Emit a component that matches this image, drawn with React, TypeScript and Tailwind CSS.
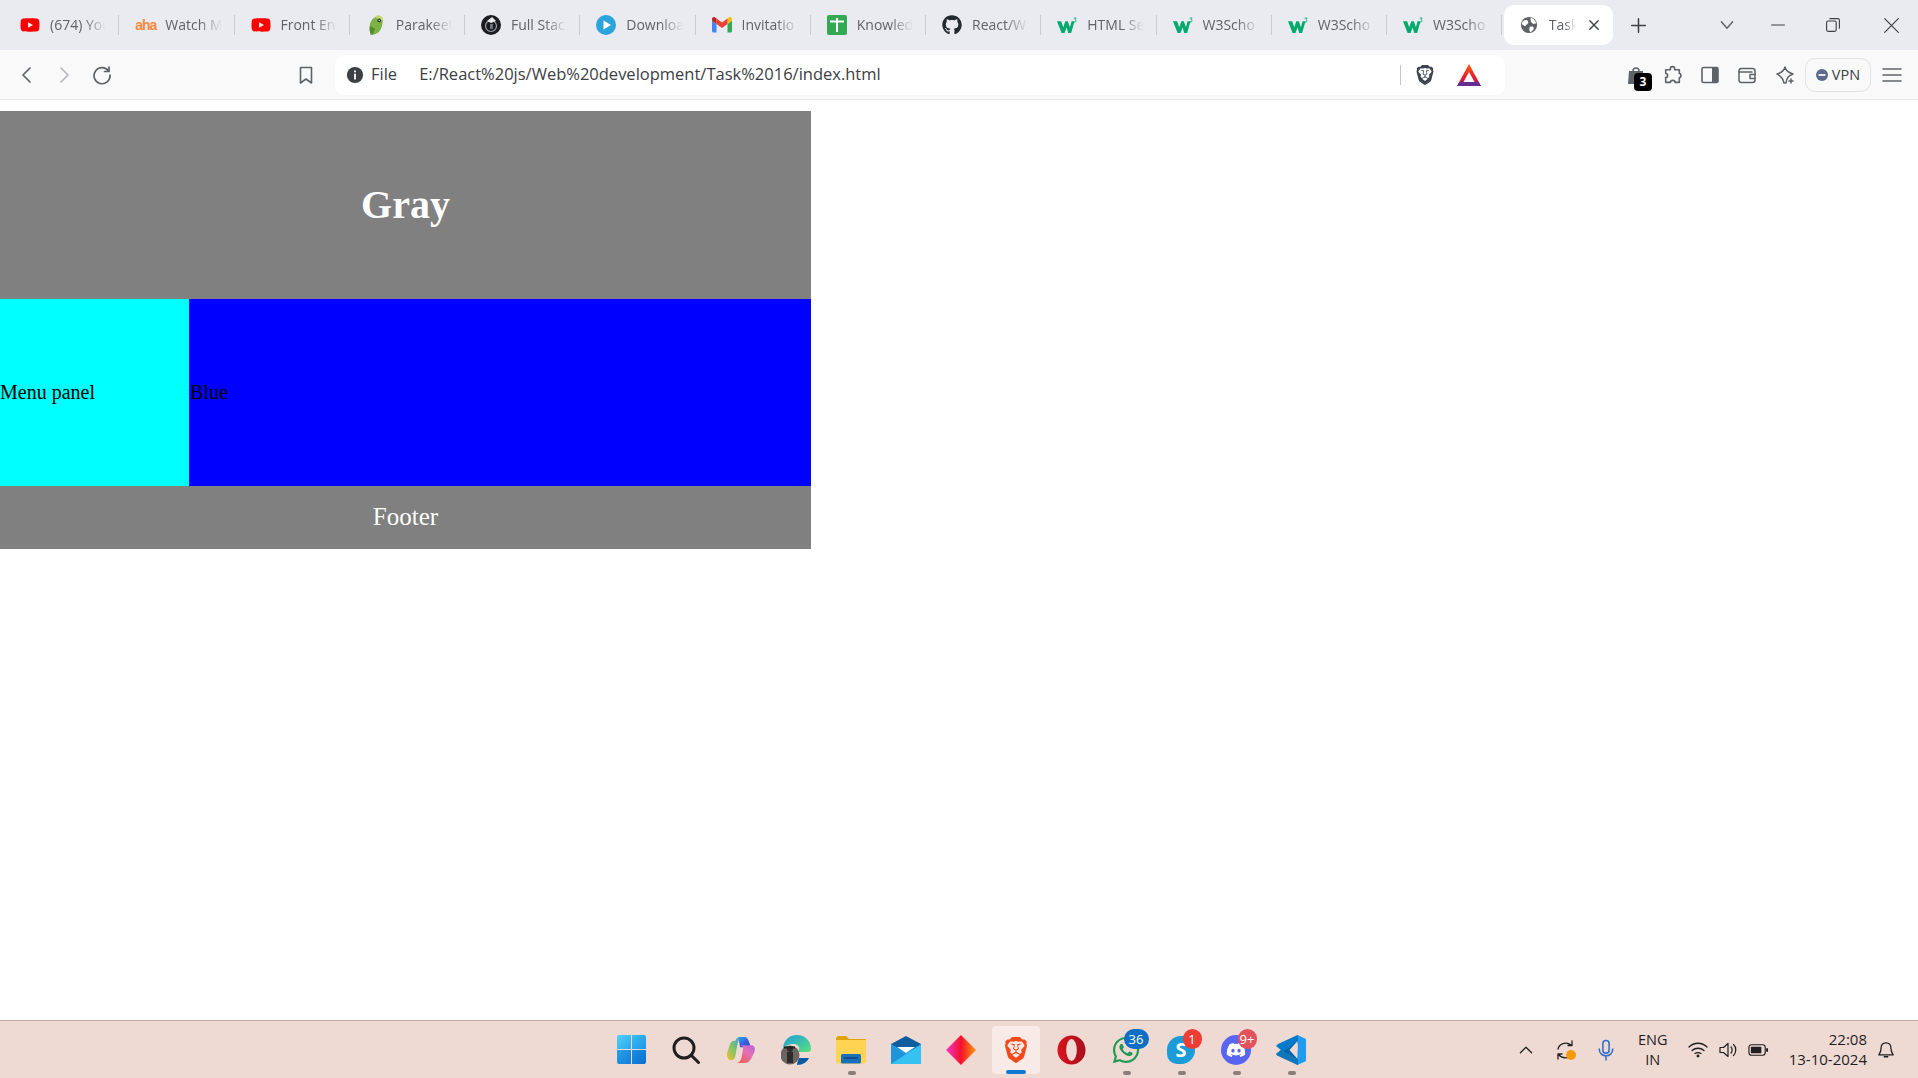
import React from "react";
import { FaGithub, FaYoutube, FaWhatsapp, FaDiscord } from "react-icons/fa";
import { SiBrave } from "react-icons/si";

const W3 = () => (
  <svg viewBox="0 0 24 20" className="w-5 h-[17px]">
    <polygon fill="#04AA6D" points="0,5 5,5 7.5,12 10,5 13,5 15.5,12 17.5,5 21,5 17,19 13.5,19 11.5,12.500 9,19 5.5,19" />
    <path d="M20 1 H23 L21.500 3 C23.500 3 23.500 6.500 20 6" fill="none" stroke="#04AA6D" strokeWidth="1" />
  </svg>
);

const YT = () => <FaYoutube className="w-5 h-5 text-[#ff0000]" />;

const Aha = () => (
  <span className="w-5 text-center text-[14px] font-bold leading-none text-[#f58a3c] tracking-[-1px] font-['Liberation_Sans',sans-serif]">aha</span>
);

const Parakeet = () => (
  <svg viewBox="0 0 20 24" className="w-5 h-[22px]">
    <path d="M4 23 L3 15 C3 8 7 3 12 3 C17 3 18 7 17 11 C16 17 13 21 9 22 Z" fill="#7cb342" />
    <path d="M9 3 C11 0 16 1 18 5 L15 8 Z" fill="#c5d86d" />
    <circle cx="13.500" cy="7" r="2" fill="#263238" />
    <circle cx="13.500" cy="7" r=".7" fill="#fff" />
    <path d="M4 13 C2 16 3 21 6 23 L9 16 Z" fill="#558b2f" />
  </svg>
);

const FullStack = () => (
  <svg viewBox="0 0 20 20" className="w-5 h-5">
    <circle cx="10" cy="10" r="10" fill="#1b1d22" />
    <circle cx="10" cy="11" r="5.5" fill="none" stroke="#9aa0a6" strokeWidth="1.2" />
    <path d="M6 6 L11 2 L15 6 L10 8 Z" fill="#e8eaed" />
    <rect x="9" y="9" width="3" height="5" fill="#6d7278" />
  </svg>
);

const Download = () => (
  <svg viewBox="0 0 20 20" className="w-5 h-5">
    <circle cx="10" cy="10" r="10" fill="#2ba3dc" />
    <path d="M7.5 5.5 L15 10 L7.5 14.5 Z" fill="#fff" />
  </svg>
);

const Gmail = () => (
  <svg viewBox="0 0 20 16" className="w-5 h-4">
    <path d="M1.4 15.5 H4.5 V7 L0 3.6 V14 C0 14.8 .6 15.5 1.4 15.5Z" fill="#4285f4" />
    <path d="M15.5 15.5 H18.6 C19.4 15.5 20 14.8 20 14 V3.6 L15.5 7Z" fill="#34a853" />
    <path d="M15.5 1.5 V7 L20 3.6 V2 C20 .4 18.2 -.5 17 .5Z" fill="#fbbc04" />
    <path d="M4.5 7 V1.5 L10 5.6 L15.5 1.5 V7 L10 11Z" fill="#ea4335" />
    <path d="M0 2 V3.6 L4.5 7 V1.5 L3 .5 C1.8 -.5 0 .4 0 2Z" fill="#c5221f" />
  </svg>
);

const Knowledge = () => (
  <svg viewBox="0 0 20 20" className="w-5 h-5">
    <rect width="20" height="20" rx="2" fill="#34a853" />
    <path d="M3 6.5 H17 M10 3 V17" stroke="#fff" strokeWidth="2" fill="none" />
  </svg>
);

const tabs: { icon: React.ReactNode; label: string }[] = [
  { icon: <YT />, label: "(674) You" },
  { icon: <Aha />, label: "Watch M" },
  { icon: <YT />, label: "Front En" },
  { icon: <Parakeet />, label: "Parakeet" },
  { icon: <FullStack />, label: "Full Stac" },
  { icon: <Download />, label: "Downloa" },
  { icon: <Gmail />, label: "Invitatio" },
  { icon: <Knowledge />, label: "Knowled" },
  { icon: <FaGithub className="w-5 h-5 text-[#24292f]" />, label: "React/W" },
  { icon: <W3 />, label: "HTML Se" },
  { icon: <W3 />, label: "W3Scho" },
  { icon: <W3 />, label: "W3Scho" },
  { icon: <W3 />, label: "W3Scho" },
];

const Globe = () => (
  <svg viewBox="0 0 20 20" className="w-[18px] h-[18px]">
    <circle cx="10" cy="10" r="9" fill="#5f6368" />
    <path d="M3 6 C6 4 8 4 9 6 C10 8 8 9 7 10 C6 12 4 11 2 9 Z M12 2 C15 3 17 5 18 8 L15 9 C13 8 11 6 12 2Z M11 12 C14 11 16 12 15 15 L12 18 C10 17 10 14 11 12Z" fill="#fff" />
  </svg>
);

const Stroke = ({ children, size = 20, w = 1.6, color = "#5f6368", vb = 20 }: { children: React.ReactNode; size?: number; w?: number; color?: string; vb?: number }) => (
  <svg viewBox={`0 0 ${vb} ${vb}`} width={size} height={size} fill="none" stroke={color} strokeWidth={w} strokeLinecap="round" strokeLinejoin="round">
    {children}
  </svg>
);

const TaskApp = ({ children, dot, badge, badgeClass }: { children: React.ReactNode; dot?: boolean; badge?: string; badgeClass?: string }) => (
  <div className="relative w-[55px] h-[57px] flex items-center justify-center">
    {children}
    {badge && (
      <span className={`absolute top-[8px] h-[20px] rounded-full text-white text-[13px] leading-[20px] text-center ${badgeClass}`}>{badge}</span>
    )}
    {dot && <span className="absolute bottom-[3px] left-[24px] w-[8px] h-[4px] rounded-full bg-[#8a7f7b]" />}
  </div>
);

const Copilot = () => (
  <svg viewBox="0 0 30 30" className="w-[28px] h-[28px]">
    <defs>
      <linearGradient id="cp1" x1="0" y1="0" x2="1" y2="1"><stop offset="0" stopColor="#2aa7e8" /><stop offset=".5" stopColor="#3b62e0" /><stop offset="1" stopColor="#1b45b9" /></linearGradient>
      <linearGradient id="cp2" x1="0" y1="1" x2="1" y2="0"><stop offset="0" stopColor="#f5c22b" /><stop offset=".5" stopColor="#7cc36b" /><stop offset="1" stopColor="#35a7d8" /></linearGradient>
      <linearGradient id="cp3" x1="0" y1="1" x2="1" y2="0"><stop offset="0" stopColor="#ee5a3a" /><stop offset=".6" stopColor="#e66fb8" /><stop offset="1" stopColor="#b35fe0" /></linearGradient>
    </defs>
    <path d="M12 1 H19 C21 1 22.500 3 23.500 6 L25.500 12 H14 Z" fill="url(#cp1)" />
    <path d="M9 5 C10 3 11 1 14 1 C12.500 3 12 6 11 10 L9 21 C8.500 25 6.500 26 4.500 26 C1 26 -1 22 .5 17 L3 9 C4 6 6 5 9 5Z" fill="url(#cp2)" />
    <path d="M15 10 H26 C30 10 30.500 14 29 18 L26.500 23 C25 27 22 29 18 29 H10 C13.500 29 15 26 16 21 L17 15 C17.500 12 16.500 10 15 10Z" fill="url(#cp3)" />
  </svg>
);

const Edge = () => (
  <svg viewBox="0 0 30 30" className="w-[30px] h-[30px]">
    <defs>
      <linearGradient id="ed1" x1="0" y1="0" x2="1" y2="1"><stop offset="0" stopColor="#1d9ce0" /><stop offset="1" stopColor="#5be27a" /></linearGradient>
    </defs>
    <path d="M2 14 C2 6 8 0 16 0 C24 0 30 6 30 14 C30 16 29 17 27 17 H17 C20 13 17 9 13 9 C8 9 4 11 2 14Z" fill="url(#ed1)" />
    <path d="M16 30 C22 30 26 27 28 23 L18 23 C17 25 16 28 16 30Z" fill="#0c59a4" />
    <circle cx="9" cy="20" r="9.500" fill="#6b6460" />
    <circle cx="9" cy="14" r="3" fill="#33302e" />
    <rect x="6" y="17" width="6" height="11" fill="#2e2b2a" />
    <rect x="3" y="11.500" width="11" height="2" fill="#222" />
  </svg>
);

const Folder = () => (
  <svg viewBox="0 0 30 28" className="w-[30px] h-[28px]">
    <path d="M0 3 C0 1.500 1 0 2.500 0 H10 L13 3 H30 V8 H0Z" fill="#e0a30c" />
    <path d="M0 4 H30 V26 C30 27 29 27.500 28 27.500 H2 C1 27.500 0 27 0 26Z" fill="#ffd453" />
    <rect x="5" y="18" width="20" height="9.500" rx="1.500" fill="#1a6fb8" />
    <rect x="8" y="21" width="14" height="2" fill="#0d4f8a" />
  </svg>
);

const Mail = () => (
  <svg viewBox="0 0 30 28" className="w-[30px] h-[28px]">
    <rect y="8" width="30" height="20" fill="#27a5e8" />
    <path d="M0 8 L15 0 L30 8 L15 17Z" fill="#0f5d9e" />
    <path d="M6 11 H24 L15 17Z" fill="#fff" />
    <path d="M0 9 L15 18 L30 9 V28 H0Z" fill="#35c1f1" />
    <path d="M0 28 L15 18 L0 9Z" fill="#1f94d8" />
  </svg>
);

const Diamond = () => (
  <svg viewBox="0 0 30 30" className="w-[30px] h-[30px]">
    <defs><linearGradient id="dm" x1="0" y1="0" x2="1" y2="0"><stop offset="0" stopColor="#f037c8" /><stop offset=".5" stopColor="#f5102e" /><stop offset="1" stopColor="#fb9a09" /></linearGradient></defs>
    <path d="M15 0 L30 15 L15 30 L0 15Z" fill="url(#dm)" />
  </svg>
);

const Opera = () => (
  <svg viewBox="0 0 30 30" className="w-[29px] h-[30px]">
    <defs><linearGradient id="op" x1="0" y1="0" x2="1" y2="0"><stop offset="0" stopColor="#d8141f" /><stop offset="1" stopColor="#a80f1c" /></linearGradient></defs>
    <ellipse cx="15" cy="15" rx="14.500" ry="15" fill="url(#op)" />
    <ellipse cx="15" cy="15" rx="5.500" ry="11.500" fill="#efd9d3" />
  </svg>
);

const Skype = () => (
  <div className="w-[28px] h-[28px] rounded-[10px] rounded-tl-[14px] rounded-br-[14px] bg-[#1b9bd8] flex items-center justify-center text-white font-bold text-[20px] leading-none font-['Open_Sans',sans-serif]">S</div>
);

const VSCode = () => (
  <svg viewBox="0 0 30 30" className="w-[30px] h-[30px]">
    <path d="M21.500 0 L30 4 V26 L21.500 30 L9 18 L21.500 15 Z" fill="#1f9cf0" />
    <path d="M21.500 0 L6 15 L21.500 30 L22 22 L14 15 L22 8Z" fill="#0065a9" />
    <path d="M2 9 L0 11 L5 15 L0 19 L2 21 L21.500 6 V0Z" fill="#007acc" />
    <path d="M2 21 L0 19 L5 15 L21.500 24 V30Z" fill="#1177bb" />
    <path d="M21.500 6 L21.500 24 L13.500 15Z" fill="#efd9d3" />
  </svg>
);

export default function App() {
  return (
    <div className="w-[1918px] h-[1078px] overflow-hidden flex flex-col bg-white font-['Open_Sans',sans-serif]">
      {/* tab strip */}
      <div className="h-[50px] shrink-0 bg-[#e9ebf0] flex items-center pl-[4px]">
        {tabs.map((t, i) => (
          <div key={i} className="w-[115.25px] h-[20px] shrink-0 flex items-center gap-[10px] pl-[16px] pr-[12px] border-r border-[#c9ccd1] last:border-r-0">
            <span className="w-5 shrink-0 flex items-center justify-center">{t.icon}</span>
            <span className="flex-1 overflow-hidden whitespace-nowrap text-[14px] leading-[20px] pb-[1px] text-[#5f6368] [mask-image:linear-gradient(to_right,black_60%,transparent)]">{t.label}</span>
          </div>
        ))}
        <div className="w-[109px] h-[40px] ml-[1.5px] shrink-0 bg-white rounded-[10px] flex items-center pl-[16px] pr-[12px] gap-[11px]">
          <span className="shrink-0"><Globe /></span>
          <span className="w-[28px] overflow-hidden whitespace-nowrap text-[14px] leading-[20px] pb-[1px] text-[#5f6368] [mask-image:linear-gradient(to_right,black_60%,transparent)]">Task</span>
          <span className="ml-auto"><Stroke size={14} w={2} color="#3c4043"><path d="M4 4 L16 16 M16 4 L4 16" /></Stroke></span>
        </div>
        <div className="ml-[17px]"><Stroke size={17} w={1.8} color="#3c4043"><path d="M10 2 V18 M2 10 H18" /></Stroke></div>
        <div className="ml-[72px]"><Stroke size={16} w={1.8}><path d="M3 6 L10 14 L17 6" /></Stroke></div>
        <div className="ml-[35px]"><Stroke size={16} w={1.4} color="#3c4043"><path d="M2 10 H18" /></Stroke></div>
        <div className="ml-[39px]"><Stroke size={16} w={1.4} color="#3c4043"><rect x="2" y="5" width="12" height="13" rx="2" /><path d="M6 2 H16 C17 2 18 3 18 4 V14" /></Stroke></div>
        <div className="ml-[42px]"><Stroke size={17} w={1.4} color="#3c4043"><path d="M2 2 L18 18 M18 2 L2 18" /></Stroke></div>
      </div>

      {/* toolbar */}
      <div className="h-[50px] shrink-0 bg-[#f9f9fa] border-b border-[#e9eaee] flex items-center">
        <div className="ml-[17px]"><Stroke size={20} w={1.7}><path d="M13 3 L6 10 L13 17" /></Stroke></div>
        <div className="ml-[17px]"><Stroke size={20} w={1.7} color="#b6b8bc"><path d="M7 3 L14 10 L7 17" /></Stroke></div>
        <div className="ml-[18px]"><Stroke size={20} w={1.7}><path d="M16.500 6 A8 8 0 1 0 18 10" /><path d="M17 2 V6.500 H12.500" /></Stroke></div>
        <div className="ml-[184px]"><Stroke size={20} w={1.6}><path d="M4.500 2.500 H15.500 V18 L10 14 L4.500 18Z" /></Stroke></div>
        <div className="ml-[19px] w-[1170px] h-[40px] bg-white rounded-[10px] flex items-center">
          <svg viewBox="0 0 20 20" className="w-[18px] h-[18px] ml-[11px]">
            <circle cx="10" cy="10" r="9" fill="#3c4043" />
            <rect x="9" y="8.500" width="2" height="6.500" fill="#fff" />
            <rect x="9" y="5" width="2" height="2" fill="#fff" />
          </svg>
          <span className="ml-[7px] text-[16.500px] text-[#3c4043]">File</span>
          <span className="ml-[22px] text-[16.500px] text-[#3c4043] whitespace-nowrap">E:/React%20js/Web%20development/Task%2016/index.html</span>
          <span className="ml-auto w-px h-[20px] bg-[#c4c6ca]" />
          <span className="ml-[14px] w-[20px] flex justify-center"><SiBrave className="w-[20px] h-[22px] text-[#3f4550]" /></span>
          <svg viewBox="0 0 24 22" className="w-[24px] h-[22px] ml-[22px] mr-[24px]">
            <defs><linearGradient id="bat" x1="0" y1="0" x2="0" y2="1"><stop offset="0" stopColor="#ff5a00" /><stop offset=".7" stopColor="#e0163b" /><stop offset="1" stopColor="#662d91" /></linearGradient></defs>
            <path d="M12 0 L24 22 H0Z" fill="url(#bat)" />
            <path d="M0 22 L2.500 18 H21.500 L24 22Z" fill="#662d91" />
            <path d="M12 8 L17.500 18 H6.500Z" fill="#fff" />
          </svg>
        </div>
        {/* right side */}
        <div className="relative ml-[121px] w-[20px] h-[20px]">
          <svg viewBox="0 0 20 20" className="w-5 h-5"><path d="M3 6 H17 L18 19 H2Z" fill="#5f6368" /><path d="M7 6 C7 2 13 2 13 6" fill="none" stroke="#5f6368" strokeWidth="1.500" /></svg>
          <span className="absolute left-[8px] top-[8px] w-[18px] h-[18px] rounded-[4px] bg-black text-white text-[12px] font-bold leading-[18px] text-center">3</span>
        </div>
        <div className="ml-[16px]"><Stroke size={21} w={1.5}><path d="M8 4 C8 2 12 2 12 4 V5.500 H16.500 V9 C18.500 9 18.500 13 16.500 13 V17.500 H12.500 C12.500 15 8 15 8 17.500 H3.500 V13 C6 13 6 9 3.500 9 V5.500 H8Z" /></Stroke></div>
        <div className="ml-[17px]"><svg viewBox="0 0 20 20" className="w-5 h-5"><rect x="2" y="2.500" width="16" height="15" rx="1.500" fill="none" stroke="#5f6368" strokeWidth="1.600" /><rect x="12" y="2.500" width="6" height="15" fill="#5f6368" /></svg></div>
        <div className="ml-[17px]"><Stroke size={20} w={1.5}><rect x="2" y="3.500" width="16" height="14" rx="2.500" /><path d="M2 7 H15 M18 9.500 H13 V13.500 H18" /></Stroke></div>
        <div className="ml-[18px]"><Stroke size={20} w={1.5}><path d="M10 2 C11 6 13 7.500 18 9 C14 10.500 12 12 11 18 H9 C8 13 6 11 2 9 C7 7.500 9 6 10 2Z" /><path d="M16 14 V18 M14 16 H18" /></Stroke></div>
        <div className="ml-[10px] w-[66px] h-[34px] rounded-[10px] border border-[#e2e3e7] flex items-center justify-center gap-[4px] text-[14.500px] text-[#3c4043]">
          <svg viewBox="0 0 14 14" className="w-3 h-3"><circle cx="7" cy="7" r="7" fill="#5e6a8c" /><rect x="3" y="6" width="8" height="2" fill="#fff" /></svg>
          VPN
        </div>
        <div className="ml-[11px]"><Stroke size={20} w={1.4}><path d="M1 4 H19 M1 10 H19 M1 16 H19" /></Stroke></div>
      </div>

      {/* page */}
      <main className="flex-1 pt-[11px] font-['Liberation_Serif',serif]">
        <div className="w-[811px]">
          <header className="h-[188px] bg-[#808080] text-white flex items-center justify-center text-[40px] font-bold">Gray</header>
          <div className="flex h-[187px]">
            <aside className="w-[189px] bg-[#00ffff] text-black text-[20px] flex items-center pb-[2px]">Menu panel</aside>
            <section className="flex-1 bg-[#0000ff] text-black text-[20px] flex items-center pb-[2px] pl-px">Blue</section>
          </div>
          <footer className="h-[63px] bg-[#808080] text-white flex items-center justify-center text-[25px] pb-[2px]">Footer</footer>
        </div>
      </main>

      {/* taskbar */}
      <div className="h-[58px] shrink-0 bg-[#efd9d3] border-t border-[#bfaaa4] relative flex justify-center pl-[4px]">
        <TaskApp>
          <div className="grid grid-cols-2 gap-[1px] w-[29px] h-[29px]">
            <span className="rounded-tl-[2px] bg-gradient-to-br from-[#4fd0fa] to-[#2aa8ea]" />
            <span className="rounded-tr-[2px] bg-gradient-to-br from-[#3bbcf5] to-[#1e96e4]" />
            <span className="rounded-bl-[2px] bg-gradient-to-br from-[#2aa0e8] to-[#0f7fd8]" />
            <span className="rounded-br-[2px] bg-gradient-to-br from-[#1b8ee0] to-[#0a6fcf]" />
          </div>
        </TaskApp>
        <TaskApp><Stroke size={30} w={3} color="#1f1f1f" vb={30}><circle cx="13" cy="13" r="10" /><path d="M20.500 20.500 L27.500 27.500" /></Stroke></TaskApp>
        <TaskApp><Copilot /></TaskApp>
        <TaskApp><Edge /></TaskApp>
        <TaskApp dot><Folder /></TaskApp>
        <TaskApp><Mail /></TaskApp>
        <TaskApp><Diamond /></TaskApp>
        <TaskApp>
          <div className="relative w-[48px] h-[48px] rounded-[4px] bg-[#f8ebe7] flex items-center justify-center">
            <SiBrave className="w-[26px] h-[30px] text-[#f1491a]" />
            <span className="absolute bottom-0 left-[14px] w-[20px] h-[4px] rounded-full bg-[#0f7ad6]" />
          </div>
        </TaskApp>
        <TaskApp><Opera /></TaskApp>
        <TaskApp dot badge="36" badgeClass="bg-[#0f6fc4] w-[25px] left-[25px]"><FaWhatsapp className="w-[30px] h-[30px] text-[#1f9a55]" /></TaskApp>
        <TaskApp dot badge="1" badgeClass="bg-[#ee3d35] w-[19px] left-[29px]"><Skype /></TaskApp>
        <TaskApp dot badge="9+" badgeClass="bg-[#e2525a] w-[19px] left-[29px]"><div className="w-[30px] h-[30px] rounded-full bg-[#5865f2] flex items-center justify-center"><FaDiscord className="w-[20px] h-[20px] text-white" /></div></TaskApp>
        <TaskApp dot><VSCode /></TaskApp>

        {/* tray */}
        <div className="absolute inset-y-0 right-0 flex items-center text-[#1f1f1f]">
          <div className="mr-[22px]"><Stroke size={14} w={1.8} color="#1f1f1f"><path d="M2 14 L10 6 L18 14" /></Stroke></div>
          <div className="relative mr-[22px]">
            <Stroke size={20} w={1.3} color="#1f1f1f"><path d="M3 9 C4 4 11 1 16 5 M17 1 V5.500 H13 M3 14 C7 19 12 18 15 17 M3 19 V14 H7" /></Stroke>
            <span className="absolute right-[-1px] bottom-[0px] w-[10px] h-[10px] rounded-full bg-[#f59a0c]" />
          </div>
          <div className="mr-[18px]"><svg viewBox="0 0 20 24" width="18" height="22" fill="none" stroke="#2f6fc9" strokeWidth="1.700" strokeLinecap="round"><rect x="6.500" y="1.500" width="7" height="14" rx="3.500" /><path d="M2.500 11 C2.500 21 17.500 21 17.500 11 M10 19 V23" /></svg></div>
          <div className="w-[40px] text-center text-[14.500px] leading-[20px] mr-[15px]"><div>ENG</div><div>IN</div></div>
          <div className="mr-[10px]"><Stroke size={20} w={1.3} color="#1f1f1f"><path d="M1 7 C6 2 14 2 19 7 M4 10.500 C7.500 7.500 12.500 7.500 16 10.500 M7 13.500 C8.500 12.500 11.500 12.500 13 13.500" /><circle cx="10" cy="16" r="0.800" fill="#1f1f1f" /></Stroke></div>
          <div className="mr-[10px]"><Stroke size={20} w={1.2} color="#1f1f1f"><path d="M2 7.500 H5.500 L10 3.500 V16.500 L5.500 12.500 H2Z M13 7 C14.500 8.500 14.500 11.500 13 13 M15.500 4.500 C18.500 7 18.500 13 15.500 15.500" /></Stroke></div>
          <div className="mr-[20px]"><svg viewBox="0 0 22 14" width="21" height="14"><rect x="1" y="1.500" width="17" height="11" rx="2.500" fill="none" stroke="#1f1f1f" strokeWidth="1.200" /><rect x="3" y="3.500" width="11" height="7" rx="1" fill="#1f1f1f" /><rect x="19" y="5" width="2" height="4" rx="1" fill="#1f1f1f" /></svg></div>
          <div className="text-right leading-[20px] mr-[10px] text-[15px] pb-[1px]"><div>22:08</div><div>13-10-2024</div></div>
          <div className="mr-[23px]"><Stroke size={18} w={1.4} color="#1f1f1f"><path d="M10 2 C6 2 4.500 5 4.500 8 C4.500 12 3 14 2 15.500 H18 C17 14 15.500 12 15.500 8 C15.500 5 14 2 10 2Z M8 17.500 H12" /></Stroke></div>
        </div>
      </div>
    </div>
  );
}
